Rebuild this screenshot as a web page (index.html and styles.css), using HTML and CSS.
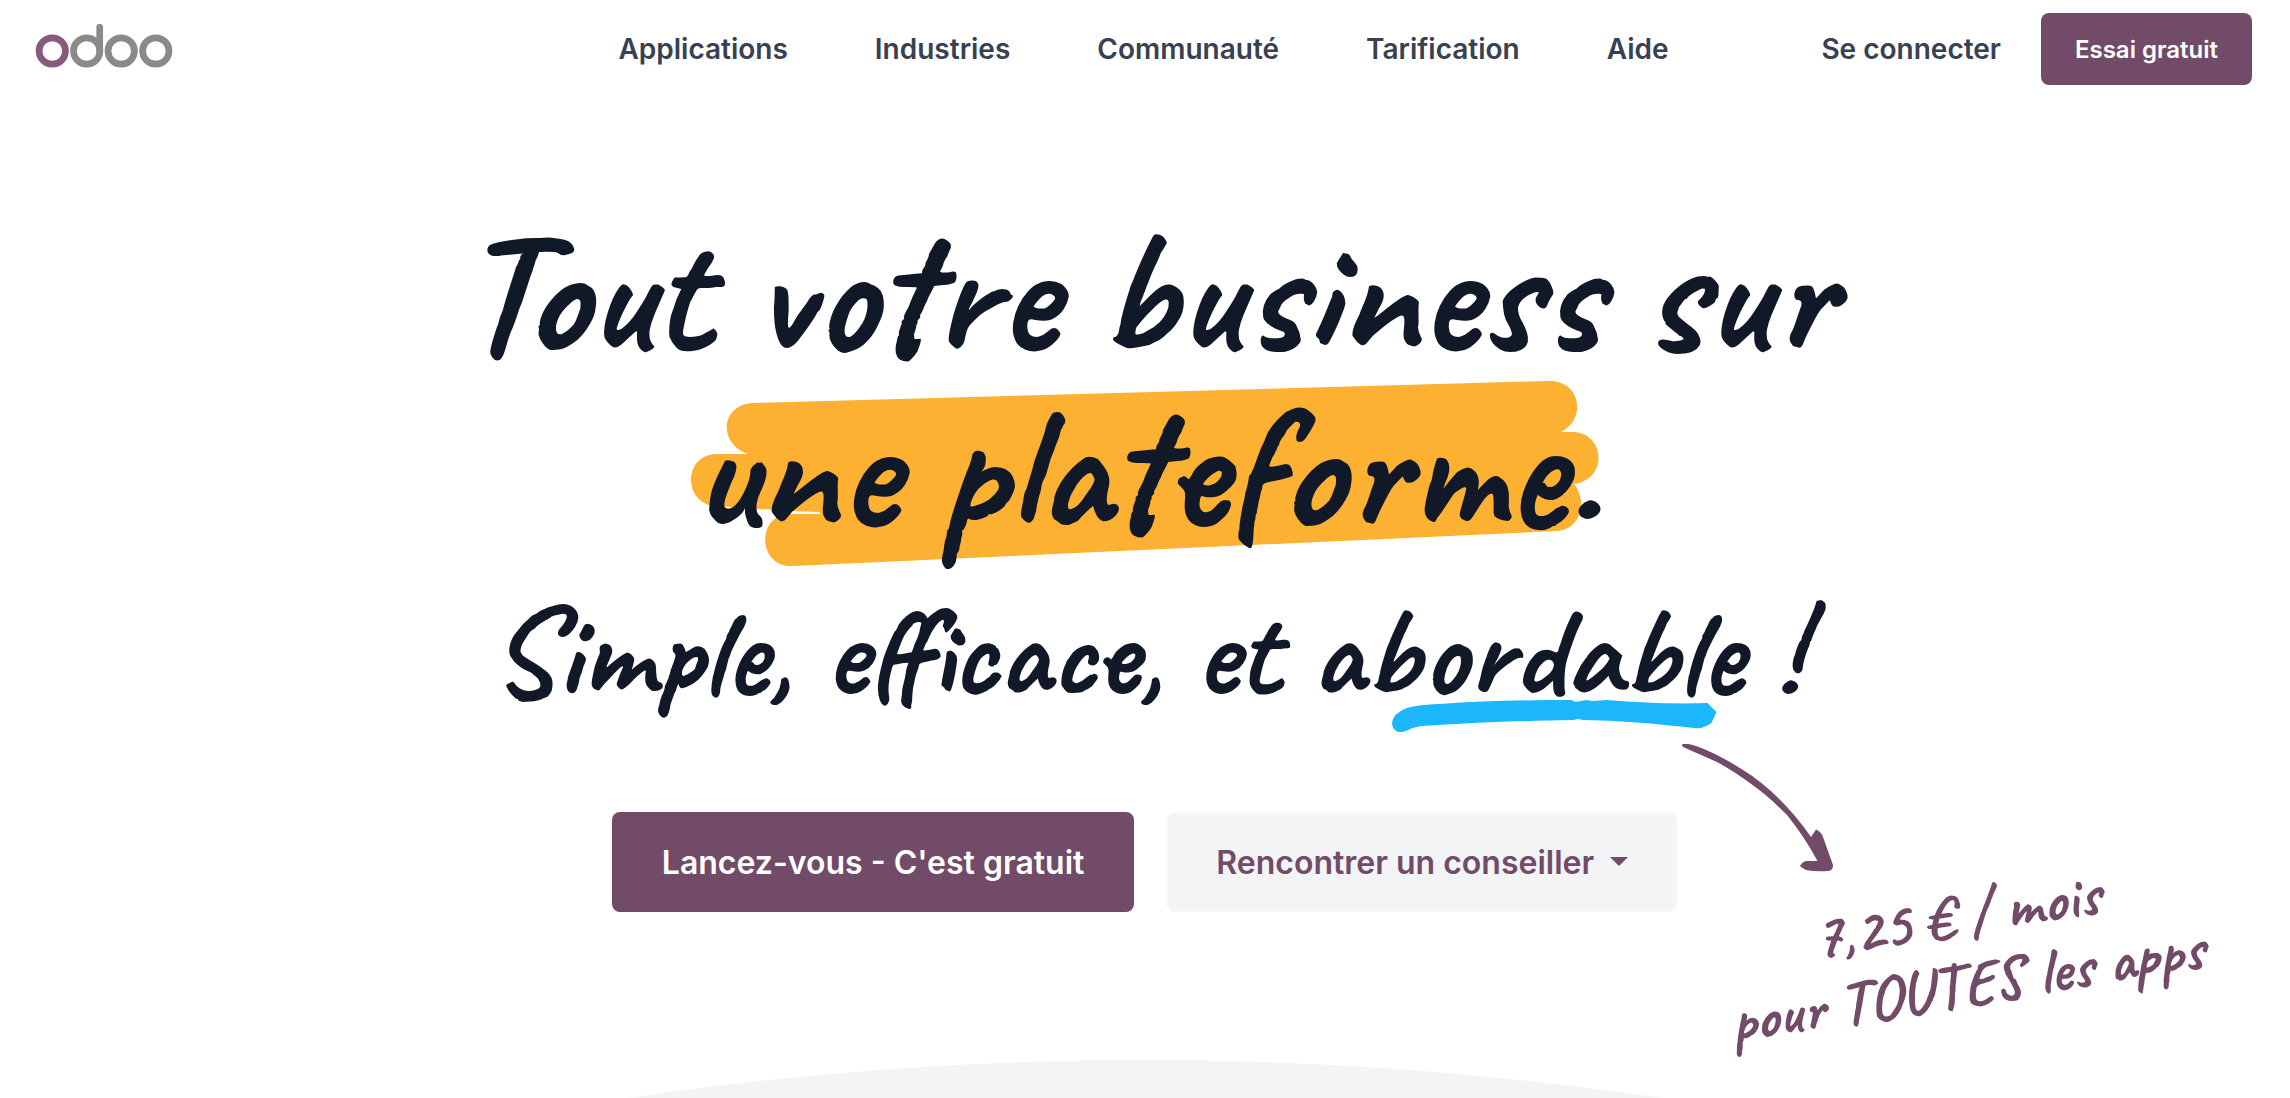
FILE: index.html
```
<!DOCTYPE html>
<html lang="fr">
<head>
  <meta charset="UTF-8">
  <meta name="viewport" content="width=device-width, initial-scale=1.0">
  <title>Odoo</title>
  <link rel="stylesheet" href="styles.css">
</head>
<body>
  <header class="header">
    <a class="logo" href="#" aria-label="odoo">
      <svg viewBox="0 0 138 50" width="138" height="50" fill="none" stroke="#8a8a8a" stroke-width="6.7" stroke-linecap="round">
        <circle cx="17.3" cy="27" r="13.2" stroke="#875a7b"/>
        <circle cx="51.7" cy="27" r="13.2"/>
        <path d="M64.7 3.3V27"/>
        <circle cx="86.2" cy="27" r="13.2"/>
        <circle cx="120.8" cy="27" r="13.2"/>
      </svg>
    </a>
    <nav class="nav">
      <a href="#">Applications</a>
      <a href="#">Industries</a>
      <a href="#">Communauté</a>
      <a href="#">Tarification</a>
      <a href="#">Aide</a>
    </nav>
    <div class="account">
      <a class="login" href="#">Se connecter</a>
      <button class="button primary small">Essai gratuit</button>
    </div>
  </header>

  <main class="hero">
    <h1 class="title">
      Tout votre business sur <span class="marked">une plateforme.<svg class="highlight" viewBox="0 0 908 186" preserveAspectRatio="none" fill="#fcb132">
          <path d="M61 22L857 0C890 -1 896 38 870 51H881C914 51 918 98 883 103C898 122 888 149 866 150L102 185C73 187 65 150 86 136L93 133H129V131L100 130L24 125C-8 122 -8 75 24 73H57C28 64 28 25 61 22Z"/>
        </svg></span>
    </h1>
    <h2 class="subtitle">
      Simple, efficace, et <span class="marked">abordable<svg class="underline" viewBox="0 0 322 32" preserveAspectRatio="none" fill="#1cb6fb">
          <path d="M7 32C-2 30-2 18 6 13C16 5 30 5 47 4C90 1 130 0 178 0L182 2L193 0L199 1L213 0C250 3 280 4 313 3L317 7L322 12L317 23C311 27 306 29 301 28C270 25 240 21 190 20L184 19L180 20C130 21 90 22 30 26C18 27 14 33 7 32Z"/>
        </svg></span> !
    </h2>

    <div class="actions">
      <button class="button primary">Lancez-vous - C'est gratuit</button>
      <button class="button secondary">Rencontrer un conseiller <span class="caret"></span></button>
      <div class="offer">
        <svg class="arrow" viewBox="0 0 152 130" width="152" height="130" fill="#714b67">
          <path d="M1 0C10 -2 38 11 61 26C87 42 112 68 129 93L134 85.500C138 87 140 90 141 93L151 121C151 125 149 127 145 127Q134 128 124 126Q120 124 118 122Q120 118 124 117H135.500Q122 92 105 71C93 59 84 51 72 42C60 33 48 25 35 18L1 3Q-1 1 1 0Z"/>
        </svg>
        <p class="price">7,25 € / mois<br>pour TOUTES les apps</p>
      </div>
    </div>

    <svg class="curve" viewBox="0 0 1036 38" preserveAspectRatio="none" fill="#f3f4f6">
      <path d="M0 38Q518 -38 1036 38Z"/>
    </svg>
  </main>
</body>
</html>
```
FILE: styles.css
```
body {
  margin: 0;
  min-height: 100vh;
  display: flex;
  flex-direction: column;
  font-family: Inter, "Liberation Sans", sans-serif;
  font-weight: 600;
  color: #374151;
  background-color: #fff;
}

a {
  color: inherit;
  text-decoration: none;
}

.header {
  display: grid;
  grid-template-columns: 1fr auto 1fr;
  align-items: center;
  height: 98px;
  padding: 0 38px 0 35px;
  font-size: 28px;
}

.logo svg {
  display: block;
}

.nav {
  display: flex;
  gap: 87px;
}

.account {
  display: flex;
  justify-content: flex-end;
  align-items: center;
  gap: 40px;
}

.button {
  padding: 0 50px;
  height: 100px;
  border: none;
  border-radius: 8px;
  font-family: inherit;
  font-size: 32px;
  font-weight: 600;
  cursor: pointer;
}

.button.primary {
  background-color: #714b67;
  color: #fff;
}

.button.secondary {
  padding: 0 48px;
  background-color: #f3f4f6;
  color: #714b67;
  border: 2px solid #f8f9fa;
}

.button.small {
  height: 72px;
  padding: 0 34px;
  font-size: 24px;
}

.caret {
  display: inline-block;
  margin-left: 8px;
  vertical-align: 8px;
  border-top: 9px solid;
  border-left: 9px solid transparent;
  border-right: 9px solid transparent;
}

.hero {
  flex: 1;
  display: flex;
  flex-direction: column;
  align-items: center;
  padding-top: 107px;
  overflow: hidden;
}

.title,
.subtitle {
  margin: 0;
  font-family: Caveat, Lato, "Open Sans", sans-serif;
  font-weight: 700;
  color: #111827;
  text-align: center;
}

/* isolate keeps the highlight behind the text but above the page */
.title {
  max-width: 1500px;
  font-size: 176px;
  line-height: 176px;
  isolation: isolate;
}

.subtitle {
  margin-top: 20px;
  font-size: 128px;
  line-height: 150px;
}

.marked {
  position: relative;
}

.highlight {
  position: absolute;
  z-index: -1;
  left: 0;
  top: 23px;
  width: 100%;
  height: 186px;
}

.underline {
  position: absolute;
  left: 19%;
  bottom: 0;
  width: 75%;
  height: 32px;
}

.actions {
  position: relative;
  display: flex;
  gap: 32px;
  margin-top: 85px;
}

/* handwritten note hanging off the right of the buttons */
.offer {
  position: absolute;
  left: 100%;
  top: -68px;
  color: #714b67;
}

.arrow {
  display: block;
  margin-left: 4px;
}

.price {
  margin: 6px 0 0 44px;
  font-family: Caveat, Lato, "Open Sans", sans-serif;
  font-size: 64px;
  font-weight: 700;
  line-height: 70px;
  text-align: center;
  white-space: nowrap;
  transform: rotate(-9deg);
}

.curve {
  width: 45.2%;
  height: 38px;
  margin-top: auto;
}
```
